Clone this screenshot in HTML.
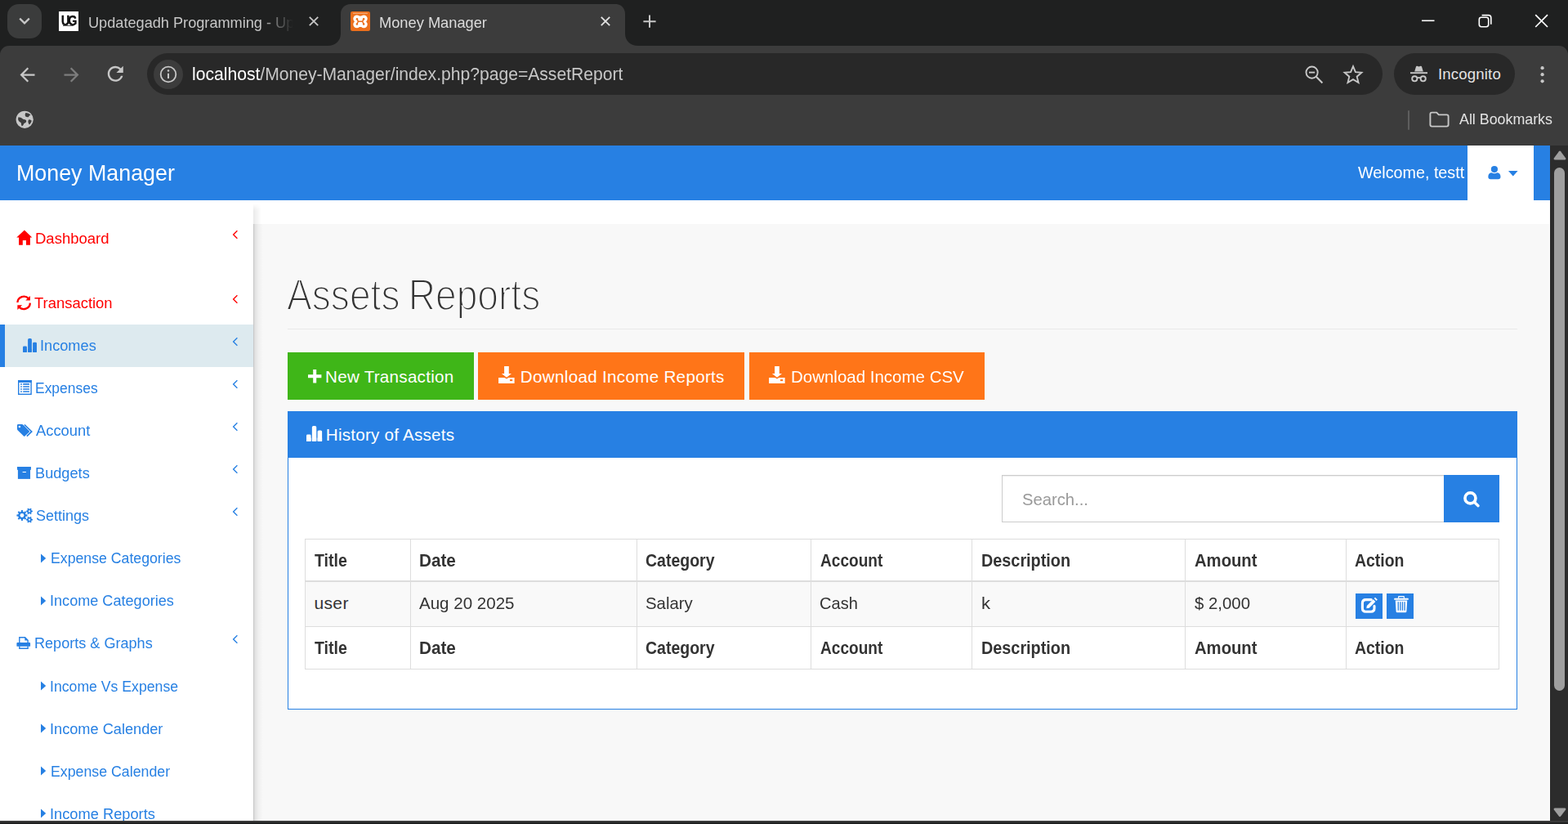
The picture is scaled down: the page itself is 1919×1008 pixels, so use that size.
<!DOCTYPE html>
<html lang="en"><head><meta charset="utf-8"><title>Money Manager</title><style>
*{margin:0;padding:0;box-sizing:border-box}
html,body{width:1919px;height:1008px;overflow:hidden;background:#fff}
body{position:relative;font-family:"Liberation Sans",sans-serif}
.b{position:absolute;display:block}
.t{position:absolute;display:block;white-space:nowrap;line-height:1;transform-origin:0 0;font-weight:400;text-decoration:none}
svg{overflow:visible}
</style></head>
<body>
<div class="browser-chrome">
<div class="b" style="left:0px;top:0px;width:1919px;height:70px;background:#1f2020;"></div>
<div class="b" style="left:0px;top:55.7px;width:1919px;height:122.3px;background:#3c3c3c;border-radius:11px 11px 0 0;"></div>
<div class="b" style="left:9px;top:5px;width:42px;height:42px;background:#3b3c3c;border-radius:14px;"></div>
<svg class="b" style="left:9px;top:5px;" width="42" height="42" viewBox="0 0 42 42"><path d="M15.2 17.6 L21 23.4 L26.8 17.6" fill="none" stroke="#c7c7c7" stroke-width="2.2"/></svg>
<div class="b" style="left:72px;top:14px;width:24px;height:24px;background:#fff;"></div>
<div class="b" style="left:74.6px;top:16.6px;font-size:16.4px;font-weight:700;color:#111;letter-spacing:-2.2px;line-height:1;white-space:nowrap;transform:scaleX(.86);transform-origin:0 0;-webkit-text-stroke:.5px #111">UG</div>
<div class="b" style="left:77px;top:30.6px;width:13px;height:0.9px;background:#555;"></div>
<span class="t" style="left:107.52px;top:19px;font-size:18.6px;color:#c7c7c7;transform:scaleX(0.9765);">Updategadh Programming - Up</span>
<div class="b" style="left:318px;top:10px;width:48px;height:36px;background:linear-gradient(90deg,rgba(31,32,32,0) 0%,#1f2020 85%)"></div>
<svg class="b" style="left:373.7px;top:16.2px;" width="20.0" height="20.0" viewBox="0 0 20.0 20.0"><path d="M4.8 4.8L15.2 15.2M15.2 4.8L4.8 15.2" stroke="#c7c7c7" stroke-width="1.8" fill="none"/></svg>
<svg class="b" style="left:401px;top:5px" width="380" height="51" viewBox="0 0 380 51"><path d="M0 51 C9 51 16 45 16 36 V12 C16 5 21 0 28 0 H352 C359 0 364 5 364 12 V36 C364 45 371 51 380 51 Z" fill="#3c3c3c"/></svg>
<svg class="b" style="left:429px;top:14px" width="24" height="24" viewBox="0 0 24 24"><rect x="0" y="0" width="24" height="24" rx="2.2" fill="#ec6f1c"/><rect x="2.8" y="1.7" width="18.2" height="1.1" rx=".5" fill="#f8b98c"/><circle cx="7.7" cy="8.8" r="4.4" fill="#fff"/><circle cx="16.3" cy="8.8" r="4.4" fill="#fff"/><circle cx="7.7" cy="15.8" r="4.4" fill="#fff"/><circle cx="16.3" cy="15.8" r="4.4" fill="#fff"/><rect x="7.7" y="5.6" width="8.6" height="13.4" fill="#fff"/><circle cx="7.9" cy="9.2" r="1.25" fill="#ec6f1c"/><circle cx="16.1" cy="9.2" r="1.25" fill="#ec6f1c"/><circle cx="7.9" cy="15.4" r="1.25" fill="#ec6f1c"/><circle cx="16.1" cy="15.4" r="1.25" fill="#ec6f1c"/><path d="M7.9 9.2 L9.4 12.3 L7.9 15.4 M16.1 9.2 L14.6 12.3 L16.1 15.4 M9.4 12.3 H14.6" stroke="#ec6f1c" stroke-width="1.5" fill="none" stroke-linecap="round"/></svg>
<span class="t" style="left:463.99px;top:19px;font-size:18.6px;color:#dcdcdc;transform:scaleX(0.9820);">Money Manager</span>
<svg class="b" style="left:731px;top:16.2px;" width="20" height="20.0" viewBox="0 0 20 20.0"><path d="M4.8 4.8L15.2 15.2M15.2 4.8L4.8 15.2" stroke="#e3e3e3" stroke-width="1.8" fill="none"/></svg>
<svg class="b" style="left:784px;top:16px;" width="22" height="22" viewBox="0 0 22 22"><path d="M11 2.6 V17.8 M3.4 10.2 H18.6" stroke="#c7c7c7" stroke-width="2" fill="none"/></svg>
<svg class="b" style="left:1736px;top:16px;" width="24" height="20" viewBox="0 0 24 20"><path d="M4 9.3 H19.5" stroke="#fff" stroke-width="1.6" fill="none"/></svg>
<svg class="b" style="left:1806px;top:14px;" width="24" height="24" viewBox="0 0 24 24"><rect x="4.3" y="7.3" width="11.4" height="11.4" rx="2.6" fill="none" stroke="#fff" stroke-width="1.6"/><path d="M7.6 4.6 H15.6 a3.2 3.2 0 0 1 3.2 3.2 V15.8" fill="none" stroke="#fff" stroke-width="1.6"/></svg>
<svg class="b" style="left:1876px;top:14px;" width="22" height="24" viewBox="0 0 22 24"><path d="M3.2 4.2 L18 19 M18 4.2 L3.2 19" stroke="#fff" stroke-width="1.7" fill="none"/></svg>
<svg class="b" style="left:19.5px;top:77.7px" width="27" height="27" viewBox="0 0 24 24"><path d="M20 11H7.83l5.59-5.59L12 4l-8 8 8 8 1.41-1.41L7.83 13H20v-2z" fill="#c7c7c7"/></svg>
<svg class="b" style="left:73.5px;top:77.7px" width="27" height="27" viewBox="0 0 24 24"><path d="M20 11H7.83l5.59-5.59L12 4l-8 8 8 8 1.41-1.41L7.83 13H20v-2z" fill="#7d7d7d" transform="translate(24,0) scale(-1,1)"/></svg>
<svg class="b" style="left:127.05000000000001px;top:76.35px" width="28.5" height="28.5" viewBox="0 0 24 24"><path d="M17.65 6.35A7.958 7.958 0 0 0 12 4c-4.42 0-7.99 3.58-7.99 8s3.57 8 7.99 8c3.73 0 6.84-2.55 7.73-6h-2.08A5.99 5.99 0 0 1 12 18c-3.31 0-6-2.69-6-6s2.69-6 6-6c1.66 0 3.14.69 4.22 1.78L13 11h7V4l-2.35 2.35z" fill="#c7c7c7"/></svg>
<div class="b" style="left:180px;top:65px;width:1512px;height:50.5px;background:#282828;border-radius:26px;"></div>
<div class="b" style="left:187.5px;top:72.5px;width:36.0px;height:36.0px;background:#3c3c3c;border-radius:18px;"></div>
<svg class="b" style="left:193.5px;top:78.5px;" width="24.0" height="24.0" viewBox="0 0 24.0 24.0"><circle cx="12" cy="12" r="9.3" fill="none" stroke="#c7c7c7" stroke-width="1.8"/><path d="M12 10.8 V17" stroke="#c7c7c7" stroke-width="2" fill="none"/><circle cx="12" cy="7.6" r="1.25" fill="#c7c7c7"/></svg>
<span class="t" style="left:235.06px;top:80px;font-size:21.6px;color:#c7c7c7;transform:scaleX(0.9773);"><span style="color:#fff">localhost</span>/Money-Manager/index.php?page=AssetReport</span>
<svg class="b" style="left:1596px;top:79px;" width="24" height="24" viewBox="0 0 24 24"><circle cx="9.6" cy="9.6" r="7.1" fill="none" stroke="#c7c7c7" stroke-width="1.9"/><path d="M14.8 14.8 L22.4 22.4" stroke="#c7c7c7" stroke-width="2.1" fill="none"/><path d="M6 9.6 H13.2" stroke="#c7c7c7" stroke-width="1.9"/></svg>
<svg class="b" style="left:1644px;top:79px;" width="24" height="24" viewBox="0 0 24 24"><path d="M12 2.2 L14.9 9.2 L22.4 9.8 L16.7 14.7 L18.5 22 L12 18.1 L5.5 22 L7.3 14.7 L1.6 9.8 L9.1 9.2 Z" fill="none" stroke="#c7c7c7" stroke-width="1.9" stroke-linejoin="miter"/></svg>
<div class="b" style="left:1706px;top:65px;width:148px;height:50.5px;background:#282828;border-radius:26px;"></div>
<svg class="b" style="left:1725px;top:79px;" width="23" height="23" viewBox="0 0 23 23"><path d="M6.2 8.6 L8 2.4 Q8.4 1.4 9.4 1.8 L11.5 2.6 L13.6 1.8 Q14.6 1.4 15 2.4 L16.8 8.6 Z" fill="#c7c7c7"/><path d="M1 10.2 H22" stroke="#c7c7c7" stroke-width="1.9"/><circle cx="6.3" cy="17.3" r="3.1" fill="none" stroke="#c7c7c7" stroke-width="1.9"/><circle cx="16.7" cy="17.3" r="3.1" fill="none" stroke="#c7c7c7" stroke-width="1.9"/><path d="M9.3 16.6 Q11.5 15.2 13.7 16.6" stroke="#c7c7c7" stroke-width="1.8" fill="none"/></svg>
<span class="t" style="left:1759.95px;top:82px;font-size:18.6px;color:#e3e3e3;letter-spacing:0.166px;">Incognito</span>
<svg class="b" style="left:1880px;top:78px;" width="16" height="26" viewBox="0 0 16 26"><circle cx="7.6" cy="5.2" r="2.1" fill="#c7c7c7"/><circle cx="7.6" cy="13.2" r="2.1" fill="#c7c7c7"/><circle cx="7.6" cy="21.3" r="2.1" fill="#c7c7c7"/></svg>
<svg class="b" style="left:19px;top:135px;" width="23" height="23" viewBox="0 0 23 23"><circle cx="11.2" cy="11.3" r="10.6" fill="#c7c7c7"/><path d="M3.2 8.6 q2.6 -.6 4.4 1 q1.6 1.8 4 1.6 q2.2 .6 1.6 2.8 q-1 1.6 -2.8 2 q-.6 2.4 -2.6 3.4 q-1.2 -2 -1 -4.2 q-2.6 -1.2 -3.6 -3.4 Z M12.4 3 q3.6 -.2 6.2 2.6 q-1.8 .8 -2.8 2.6 q-2.2 .6 -3.8 -1 q-1 -2.2 .4 -4.2 Z M16.4 11.2 q2.4 -.2 3.4 1.6 q-.6 3 -2.8 4.8 q-1.4 -1.4 -1.6 -3.6 q-.2 -1.6 1 -2.8 Z" fill="#3c3c3c"/></svg>
<div class="b" style="left:1723.3px;top:135px;width:1.7px;height:23.5px;background:#5e5e5e;border-radius:1px;"></div>
<svg class="b" style="left:1749px;top:136px;" width="25" height="20" viewBox="0 0 25 20"><path d="M1.4 3.6 Q1.4 1.6 3.4 1.6 H9.2 L11.8 4.4 H21.6 Q23.6 4.4 23.6 6.4 V16.6 Q23.6 18.6 21.6 18.6 H3.4 Q1.4 18.6 1.4 16.6 Z" fill="none" stroke="#c7c7c7" stroke-width="1.9" stroke-linejoin="round"/></svg>
<span class="t" style="left:1785.63px;top:137px;font-size:18.6px;color:#e3e3e3;transform:scaleX(0.9588);">All Bookmarks</span>
</div>
<div class="page">
<div class="b" style="left:0px;top:178px;width:1897px;height:826px;background:#ffffff;"></div>
<div class="b" style="left:310px;top:274px;width:1586px;height:730px;background:#f8f8f8;"></div>
<div class="b" style="left:310px;top:274px;width:13px;height:730px;background:linear-gradient(90deg,rgba(0,0,0,.24) 0,rgba(0,0,0,.12) 1.2px,rgba(0,0,0,.08) 3px,rgba(0,0,0,.03) 7px,rgba(0,0,0,0) 12px)"></div>
<div class="b" style="left:310px;top:249px;width:11px;height:25px;background:linear-gradient(90deg,rgba(0,0,0,.085) 0,rgba(0,0,0,.05) 4px,rgba(0,0,0,0) 10px);-webkit-mask-image:linear-gradient(180deg,rgba(0,0,0,0) 0,#000 9px);mask-image:linear-gradient(180deg,rgba(0,0,0,0) 0,#000 9px)"></div>
<header class="navbar">
<div class="b" style="left:0px;top:178px;width:1897px;height:67px;background:#2780e3;"></div>
<span class="t" style="left:19.83px;top:198px;font-size:27.8px;color:#ffffff;transform:scaleX(0.9651);">Money Manager</span>
<span class="t" style="left:1661.60px;top:201px;font-size:20.5px;color:#ffffff;transform:scaleX(0.9630);">Welcome, testt</span>
<div class="b" style="left:1796px;top:178px;width:81px;height:67px;background:#ffffff;"></div>
<svg class="b" style="left:1821px;top:203px;" width="16" height="16.2" viewBox="0 0 16 16.2"><circle cx="7.9" cy="4.1" r="4.1" fill="#2780e3"/><path d="M0.3 13.2 C0.3 10 2.2 8.2 4.6 8.2 Q7.9 10.2 11.2 8.2 C13.6 8.2 15.5 10 15.5 13.2 C15.5 15.2 14.4 16.2 12.6 16.2 H3.2 C1.4 16.2 0.3 15.2 0.3 13.2 Z" fill="#2780e3"/></svg>
<svg class="b" style="left:1845.6px;top:209px;" width="11.6" height="6.6" viewBox="0 0 11.6 6.6"><path d="M0 0 H11.6 L5.8 6.6 Z" fill="#2780e3"/></svg>
</header>
<nav class="sidebar">
<svg class="b" style="left:20px;top:281px;" width="20" height="19" viewBox="0 0 20 19"><path d="M9.9 0.5 L19.3 9.6 H16.9 V18.85 H12 V12.9 H7.8 V18.85 H3.1 V9.6 H0.25 Z" fill="#ff0000"/></svg>
<a class="t" style="left:42.65px;top:283px;font-size:18.7px;color:#ff0000;transform:scaleX(0.9907);">Dashboard</a>
<svg class="b" style="left:283px;top:280.2px;" width="10" height="14.0" viewBox="0 0 10 14.0"><path d="M7.4 2.2 L2.6 7 L7.4 11.8" fill="none" stroke="#ff0000" stroke-width="1.35"/></svg>
<svg class="b" style="left:20px;top:361px;" width="19" height="19" viewBox="0 0 19 19"><path d="M1.4 9 A7.75 7.75 0 0 1 15 4.35" fill="none" stroke="#ff0000" stroke-width="2.3"/><path d="M16.9 1.1 V6.6 H11.3 Z" fill="#ff0000"/><path d="M16.85 9.6 A7.75 7.75 0 0 1 3.16 14.3" fill="none" stroke="#ff0000" stroke-width="2.3"/><path d="M1.4 17.9 V12.3 H7.1 Z" fill="#ff0000"/></svg>
<a class="t" style="left:42.19px;top:362px;font-size:18.7px;color:#ff0000;transform:scaleX(0.9860);">Transaction</a>
<svg class="b" style="left:283px;top:359.2px;" width="10" height="14.0" viewBox="0 0 10 14.0"><path d="M7.4 2.2 L2.6 7 L7.4 11.8" fill="none" stroke="#ff0000" stroke-width="1.35"/></svg>
<div class="b" style="left:0px;top:397px;width:310px;height:52px;background:#ddeaef;"></div>
<div class="b" style="left:0px;top:397px;width:6px;height:52px;background:#2780e3;"></div>
<svg class="b" style="left:27.8px;top:414.1px;" width="17.0" height="16.9" viewBox="0 0 17 16.9"><rect x="0" y="9.4" width="4.95" height="7.5" rx="1.3" fill="#2780e3"/><rect x="0" y="13" width="4.95" height="3.9" fill="#2780e3"/><rect x="6.1" y="0" width="4.8" height="16.9" rx="1.6" fill="#2780e3"/><rect x="6.1" y="13" width="4.8" height="3.9" fill="#2780e3"/><rect x="12.1" y="4.8" width="4.9" height="12.1" rx="1.4" fill="#2780e3"/><rect x="12.1" y="13" width="4.9" height="3.9" fill="#2780e3"/></svg>
<a class="t" style="left:48.78px;top:414px;font-size:18.7px;color:#2780e3;transform:scaleX(0.9731);">Incomes</a>
<svg class="b" style="left:283px;top:411px;" width="10" height="14" viewBox="0 0 10 14"><path d="M7.4 2.2 L2.6 7 L7.4 11.8" fill="none" stroke="#2780e3" stroke-width="1.35"/></svg>
<svg class="b" style="left:21.9px;top:465px;" width="16.8" height="18" viewBox="0 0 16.8 18"><rect x="0.7" y="0.7" width="15.4" height="16.6" fill="none" stroke="#2780e3" stroke-width="1.4"/><rect x="0" y="0" width="16.8" height="3" fill="#2780e3"/><rect x="3.1" y="4.1" width="1.8" height="1.7" rx=".4" fill="#2780e3"/><rect x="6.1" y="4.1" width="7.9" height="1.7" rx=".5" fill="#2780e3"/><rect x="3.1" y="7.15" width="1.8" height="1.7" rx=".4" fill="#2780e3"/><rect x="6.1" y="7.15" width="7.9" height="1.7" rx=".5" fill="#2780e3"/><rect x="3.1" y="10.15" width="1.8" height="1.7" rx=".4" fill="#2780e3"/><rect x="6.1" y="10.15" width="7.9" height="1.7" rx=".5" fill="#2780e3"/><rect x="3.1" y="13.15" width="1.8" height="1.7" rx=".4" fill="#2780e3"/><rect x="6.1" y="13.15" width="7.9" height="1.7" rx=".5" fill="#2780e3"/></svg>
<a class="t" style="left:43.28px;top:466px;font-size:18.7px;color:#2780e3;transform:scaleX(0.9336);">Expenses</a>
<svg class="b" style="left:283px;top:463.2px;" width="10" height="14.0" viewBox="0 0 10 14.0"><path d="M7.4 2.2 L2.6 7 L7.4 11.8" fill="none" stroke="#2780e3" stroke-width="1.35"/></svg>
<svg class="b" style="left:20.85px;top:519px;" width="19.0" height="15" viewBox="0 0 19.0 15"><path d="M0 1.2 Q0 0 1.2 0 H5.8 Q6.6 0 7.2 0.6 L14.8 8.2 Q15.5 8.9 14.8 9.6 L9.4 14.6 Q8.7 15.2 8 14.6 L0.6 7.2 Q0 6.6 0 5.8 Z" fill="#2780e3"/><circle cx="2.85" cy="3.1" r="1.25" fill="#fff"/><path d="M8.9 0.5 L17.7 8.95 L11.9 14.6" fill="none" stroke="#2780e3" stroke-width="1.7"/></svg>
<a class="t" style="left:43.97px;top:518px;font-size:18.7px;color:#2780e3;transform:scaleX(0.9813);">Account</a>
<svg class="b" style="left:283px;top:515.3px;" width="10" height="14.0" viewBox="0 0 10 14.0"><path d="M7.4 2.2 L2.6 7 L7.4 11.8" fill="none" stroke="#2780e3" stroke-width="1.35"/></svg>
<svg class="b" style="left:21px;top:571px;" width="17" height="15" viewBox="0 0 17 15"><rect x="0" y="0" width="16.95" height="3.75" fill="#2780e3"/><rect x="0.9" y="3" width="15.15" height="11.9" fill="#2780e3"/><rect x="6.5" y="6" width="4.5" height="1.1" rx=".5" fill="#fff"/></svg>
<a class="t" style="left:43.14px;top:570px;font-size:18.7px;color:#2780e3;transform:scaleX(0.9733);">Budgets</a>
<svg class="b" style="left:283px;top:567.3px;" width="10" height="14.0" viewBox="0 0 10 14.0"><path d="M7.4 2.2 L2.6 7 L7.4 11.8" fill="none" stroke="#2780e3" stroke-width="1.35"/></svg>
<svg class="b" style="left:20px;top:621px;" width="21" height="20" viewBox="0 0 21 20"><polygon points="13.49,8.62 13.49,10.38 11.54,10.72 11.06,11.89 12.20,13.50 10.95,14.75 9.34,13.61 8.17,14.09 7.83,16.04 6.07,16.04 5.73,14.09 4.56,13.61 2.95,14.75 1.70,13.50 2.84,11.89 2.36,10.72 0.41,10.38 0.41,8.62 2.36,8.28 2.84,7.11 1.70,5.50 2.95,4.25 4.56,5.39 5.73,4.91 6.07,2.96 7.83,2.96 8.17,4.91 9.34,5.39 10.95,4.25 12.20,5.50 11.06,7.11 11.54,8.28" fill="#2780e3"/><circle cx="6.95" cy="9.5" r="2.45" fill="#fff"/><polygon points="19.94,3.69 19.94,5.11 18.71,5.38 18.20,6.26 18.58,7.46 17.35,8.16 16.51,7.23 15.49,7.23 14.65,8.16 13.42,7.46 13.80,6.26 13.29,5.38 12.06,5.11 12.06,3.69 13.29,3.42 13.80,2.54 13.42,1.34 14.65,0.64 15.49,1.57 16.51,1.57 17.35,0.64 18.58,1.34 18.20,2.54 18.71,3.42" fill="#2780e3"/><circle cx="16" cy="4.4" r="1.15" fill="#fff"/><polygon points="19.94,13.99 19.94,15.41 18.71,15.68 18.20,16.56 18.58,17.76 17.35,18.46 16.51,17.53 15.49,17.53 14.65,18.46 13.42,17.76 13.80,16.56 13.29,15.68 12.06,15.41 12.06,13.99 13.29,13.72 13.80,12.84 13.42,11.64 14.65,10.94 15.49,11.87 16.51,11.87 17.35,10.94 18.58,11.64 18.20,12.84 18.71,13.72" fill="#2780e3"/><circle cx="16" cy="14.7" r="1.15" fill="#fff"/></svg>
<a class="t" style="left:43.86px;top:622px;font-size:18.7px;color:#2780e3;transform:scaleX(0.9645);">Settings</a>
<svg class="b" style="left:283px;top:619.4px;" width="10" height="14.0" viewBox="0 0 10 14.0"><path d="M7.4 2.2 L2.6 7 L7.4 11.8" fill="none" stroke="#2780e3" stroke-width="1.35"/></svg>
<svg class="b" style="left:50px;top:676.5px;" width="7" height="12.0" viewBox="0 0 7 12.0"><path d="M0 0.6 L6.2 6 L0 11.4 Z" fill="#2780e3"/></svg>
<a class="t" style="left:61.67px;top:674px;font-size:18.7px;color:#2780e3;transform:scaleX(0.9471);">Expense Categories</a>
<svg class="b" style="left:50px;top:728.5px;" width="7" height="12.0" viewBox="0 0 7 12.0"><path d="M0 0.6 L6.2 6 L0 11.4 Z" fill="#2780e3"/></svg>
<a class="t" style="left:61.36px;top:726px;font-size:18.7px;color:#2780e3;transform:scaleX(0.9682);">Income Categories</a>
<svg class="b" style="left:20px;top:779px;" width="18" height="16" viewBox="0 0 18 16"><path d="M3.8 7 V0.7 H10.6 L14.1 4.2 V7" fill="none" stroke="#2780e3" stroke-width="1.4"/><path d="M10.3 0.4 L14.4 4.5 H10.3 Z" fill="#2780e3"/><rect x="0.4" y="7" width="16.7" height="4.8" rx="0.9" fill="#2780e3"/><path d="M3.8 11.6 V14.2 H14.1 V11.6" fill="none" stroke="#2780e3" stroke-width="1.4"/></svg>
<a class="t" style="left:41.96px;top:778px;font-size:18.7px;color:#2780e3;transform:scaleX(0.9673);">Reports &amp; Graphs</a>
<svg class="b" style="left:283px;top:775.4px;" width="10" height="14.0" viewBox="0 0 10 14.0"><path d="M7.4 2.2 L2.6 7 L7.4 11.8" fill="none" stroke="#2780e3" stroke-width="1.35"/></svg>
<svg class="b" style="left:50px;top:833.2px;" width="7" height="12.0" viewBox="0 0 7 12.0"><path d="M0 0.6 L6.2 6 L0 11.4 Z" fill="#2780e3"/></svg>
<a class="t" style="left:61.47px;top:831px;font-size:18.7px;color:#2780e3;transform:scaleX(0.9449);">Income Vs Expense</a>
<svg class="b" style="left:50px;top:885.2px;" width="7" height="12.0" viewBox="0 0 7 12.0"><path d="M0 0.6 L6.2 6 L0 11.4 Z" fill="#2780e3"/></svg>
<a class="t" style="left:61.38px;top:883px;font-size:18.7px;color:#2780e3;transform:scaleX(0.9726);">Income Calender</a>
<svg class="b" style="left:50px;top:937.2px;" width="7" height="12.0" viewBox="0 0 7 12.0"><path d="M0 0.6 L6.2 6 L0 11.4 Z" fill="#2780e3"/></svg>
<a class="t" style="left:61.66px;top:935px;font-size:18.7px;color:#2780e3;transform:scaleX(0.9502);">Expense Calender</a>
<svg class="b" style="left:50px;top:989.4px;" width="7" height="12.0" viewBox="0 0 7 12.0"><path d="M0 0.6 L6.2 6 L0 11.4 Z" fill="#2780e3"/></svg>
<a class="t" style="left:61.32px;top:987px;font-size:18.7px;color:#2780e3;transform:scaleX(0.9770);">Income Reports</a>
</nav>
<main class="content">
<h1 class="t" style="left:351.19px;top:333px;font-size:53.2px;color:#333333;transform:translateY(0.6px) scaleX(0.8675);-webkit-text-stroke:2px #f8f8f8;word-spacing:-3px;">Assets Reports</h1>
<div class="b" style="left:352px;top:402px;width:1505px;height:1px;background:#e9e9e9;"></div>
<div class="b" style="left:352px;top:431px;width:227.6px;height:58px;background:#3fb618;"></div>
<svg class="b" style="left:377.2px;top:452px;" width="16.6" height="16.2" viewBox="0 0 16.6 16.2"><path d="M6.2 0 H10.2 V6.2 H16.4 V10.2 H10.2 V16.4 H6.2 V10.2 H0 V6.2 H6.2 Z" fill="#fff"/></svg>
<span class="t" style="left:398.05px;top:451px;font-size:20.6px;color:#ffffff;letter-spacing:0.268px;">New Transaction</span>
<div class="b" style="left:585px;top:431px;width:325.8px;height:58px;background:#ff7518;"></div>
<svg class="b" style="left:610px;top:448px;" width="19.6" height="21" viewBox="0 0 19.6 21"><path d="M7.1 0.1 H12.8 V9 H16 L10 13.7 L3.9 9 H7.1 Z" fill="#fff"/><path d="M0.1 14 H7.6 L10 15.6 L12.4 14 H19.6 V21 H0.1 Z" fill="#fff"/><rect x="14" y="16.1" width="3.2" height="2" fill="#ff7518"/></svg>
<span class="t" style="left:636.87px;top:451px;font-size:20.6px;color:#ffffff;letter-spacing:0.313px;">Download Income Reports</span>
<div class="b" style="left:917px;top:431px;width:287.6px;height:58px;background:#ff7518;"></div>
<svg class="b" style="left:941.4px;top:448px;" width="19.6" height="21" viewBox="0 0 19.6 21"><path d="M7.1 0.1 H12.8 V9 H16 L10 13.7 L3.9 9 H7.1 Z" fill="#fff"/><path d="M0.1 14 H7.6 L10 15.6 L12.4 14 H19.6 V21 H0.1 Z" fill="#fff"/><rect x="14" y="16.1" width="3.2" height="2" fill="#ff7518"/></svg>
<span class="t" style="left:967.94px;top:451px;font-size:20.6px;color:#ffffff;transform:scaleX(0.9946);">Download Income CSV</span>
<section class="panel">
<div class="b" style="left:352px;top:503px;width:1505.4px;height:364.6px;background:#ffffff;border:1px solid #2780e3;"></div>
<div class="b" style="left:352px;top:503px;width:1505.4px;height:56.6px;background:#2780e3;"></div>
<svg class="b" style="left:374.8px;top:521.1px;" width="19.12" height="19.01" viewBox="0 0 17 16.9"><rect x="0" y="9.4" width="4.95" height="7.5" rx="1.3" fill="#ffffff"/><rect x="0" y="13" width="4.95" height="3.9" fill="#ffffff"/><rect x="6.1" y="0" width="4.8" height="16.9" rx="1.6" fill="#ffffff"/><rect x="6.1" y="13" width="4.8" height="3.9" fill="#ffffff"/><rect x="12.1" y="4.8" width="4.9" height="12.1" rx="1.4" fill="#ffffff"/><rect x="12.1" y="13" width="4.9" height="3.9" fill="#ffffff"/></svg>
<span class="t" style="left:398.80px;top:522px;font-size:20.6px;color:#ffffff;letter-spacing:0.244px;">History of Assets</span>
<div class="b" style="left:1226px;top:581px;width:542px;height:58px;background:#ffffff;border:1px solid #ccc;box-shadow:inset 0 1px 1px rgba(0,0,0,.075);"></div>
<span class="t" style="left:1250.53px;top:601px;font-size:20.7px;color:#999999;transform:scaleX(0.9779);">Search...</span>
<div class="b" style="left:1767px;top:581px;width:68px;height:58px;background:#2780e3;"></div>
<svg class="b" style="left:1791px;top:600.6px;" width="20" height="20.0" viewBox="0 0 20 20.0"><circle cx="8.45" cy="8.4" r="6.5" fill="none" stroke="#fff" stroke-width="3.6"/><path d="M13.4 13.2 L18.1 17.7" stroke="#fff" stroke-width="3.3" stroke-linecap="round"/></svg>
<div class="b" style="left:373px;top:712px;width:1462px;height:54px;background:#f9f9f9;"></div>
<div class="b" style="left:373px;top:659px;width:1px;height:160px;background:#dddddd;"></div>
<div class="b" style="left:502px;top:659px;width:1px;height:160px;background:#dddddd;"></div>
<div class="b" style="left:779px;top:659px;width:1px;height:160px;background:#dddddd;"></div>
<div class="b" style="left:992px;top:659px;width:1px;height:160px;background:#dddddd;"></div>
<div class="b" style="left:1189px;top:659px;width:1px;height:160px;background:#dddddd;"></div>
<div class="b" style="left:1450px;top:659px;width:1px;height:160px;background:#dddddd;"></div>
<div class="b" style="left:1647px;top:659px;width:1px;height:160px;background:#dddddd;"></div>
<div class="b" style="left:1834px;top:659px;width:1px;height:160px;background:#dddddd;"></div>
<div class="b" style="left:373px;top:659px;width:1462px;height:1px;background:#dddddd;"></div>
<div class="b" style="left:373px;top:710px;width:1462px;height:2px;background:#dddddd;"></div>
<div class="b" style="left:373px;top:766px;width:1462px;height:1px;background:#dddddd;"></div>
<div class="b" style="left:373px;top:818px;width:1462px;height:1px;background:#dddddd;"></div>
<span class="t" style="left:385.27px;top:675px;font-size:22.1px;color:#333333;font-weight:700;transform:scaleX(0.8838);">Title</span>
<span class="t" style="left:513.30px;top:675px;font-size:22.1px;color:#333333;font-weight:700;transform:scaleX(0.9356);">Date</span>
<span class="t" style="left:790.20px;top:675px;font-size:22.1px;color:#333333;font-weight:700;transform:scaleX(0.8829);">Category</span>
<span class="t" style="left:1003.51px;top:675px;font-size:22.1px;color:#333333;font-weight:700;transform:scaleX(0.8632);">Account</span>
<span class="t" style="left:1200.86px;top:675px;font-size:22.1px;color:#333333;font-weight:700;transform:scaleX(0.8970);">Description</span>
<span class="t" style="left:1461.74px;top:675px;font-size:22.1px;color:#333333;font-weight:700;transform:scaleX(0.9166);">Amount</span>
<span class="t" style="left:1658.38px;top:675px;font-size:22.1px;color:#333333;font-weight:700;transform:scaleX(0.8788);">Action</span>
<span class="t" style="left:385.27px;top:782px;font-size:22.1px;color:#333333;font-weight:700;transform:scaleX(0.8838);">Title</span>
<span class="t" style="left:513.30px;top:782px;font-size:22.1px;color:#333333;font-weight:700;transform:scaleX(0.9356);">Date</span>
<span class="t" style="left:790.20px;top:782px;font-size:22.1px;color:#333333;font-weight:700;transform:scaleX(0.8829);">Category</span>
<span class="t" style="left:1003.51px;top:782px;font-size:22.1px;color:#333333;font-weight:700;transform:scaleX(0.8632);">Account</span>
<span class="t" style="left:1200.86px;top:782px;font-size:22.1px;color:#333333;font-weight:700;transform:scaleX(0.8970);">Description</span>
<span class="t" style="left:1461.74px;top:782px;font-size:22.1px;color:#333333;font-weight:700;transform:scaleX(0.9166);">Amount</span>
<span class="t" style="left:1658.38px;top:782px;font-size:22.1px;color:#333333;font-weight:700;transform:scaleX(0.8788);">Action</span>
<span class="t" style="left:384.43px;top:727px;font-size:21.0px;color:#333333;letter-spacing:0.382px;">user</span>
<span class="t" style="left:513.05px;top:727px;font-size:21.0px;color:#333333;transform:scaleX(0.9780);">Aug 20 2025</span>
<span class="t" style="left:789.62px;top:727px;font-size:21.0px;color:#333333;transform:scaleX(0.9706);">Salary</span>
<span class="t" style="left:1003.08px;top:727px;font-size:21.0px;color:#333333;transform:scaleX(0.9558);">Cash</span>
<span class="t" style="left:1200.94px;top:727px;font-size:21.0px;color:#333333;transform:scaleX(1.0497);">k</span>
<span class="t" style="left:1462.27px;top:727px;font-size:21.0px;color:#333333;transform:scaleX(0.9704);">$ 2,000</span>
<div class="b" style="left:1659px;top:726px;width:33px;height:31px;background:#2780e3;"></div>
<svg class="b" style="left:1666px;top:730.6px;" width="20" height="19.0" viewBox="0 0 20 19.0"><path d="M12.2 2.6 H5.6 Q1.4 2.6 1.4 6.8 V13 Q1.4 17.2 5.6 17.2 H11.8 Q16 17.2 16 13 V10.4" fill="none" stroke="#fff" stroke-width="3.1" stroke-linecap="round"/><path d="M6.9 9.9 L14.6 2.2 L17.4 5 L9.7 12.7 L6.3 13.3 Z" fill="#fff"/><path d="M15.7 1.1 L17 -0.2 L19.8 2.6 L18.5 3.9 Z" fill="#fff"/></svg>
<div class="b" style="left:1697px;top:726px;width:33px;height:31px;background:#2780e3;"></div>
<svg class="b" style="left:1705.6px;top:728.8px;" width="18.0" height="20.6" viewBox="0 0 18.0 20.6"><path d="M5.6 2.8 V1.4 Q5.6 0.6 6.4 0.6 H11.6 Q12.4 0.6 12.4 1.4 V2.8" fill="none" stroke="#fff" stroke-width="1.3"/><rect x="0.2" y="2.8" width="17.6" height="2" rx=".6" fill="#fff"/><path d="M1.8 5.6 H16.2 L15.4 19 Q15.3 20.2 14.1 20.2 H3.9 Q2.7 20.2 2.6 19 Z" fill="#fff"/><rect x="4.6" y="7.2" width="1.3" height="10.6" fill="#2780e3"/><rect x="7.2" y="7.2" width="1.3" height="10.6" fill="#2780e3"/><rect x="9.8" y="7.2" width="1.3" height="10.6" fill="#2780e3"/><rect x="12.4" y="7.2" width="1.3" height="10.6" fill="#2780e3"/></svg>
</section>
</main>
<div class="b" style="left:1897px;top:178px;width:22px;height:826px;background:#2c2c2c;"></div>
<div class="b" style="left:1902px;top:205px;width:13.2px;height:639.8px;background:#9f9f9f;border-radius:7px;"></div>
<svg class="b" style="left:1900.6px;top:184px;" width="16.0" height="12" viewBox="0 0 16.0 12"><path d="M6.9 1.2 Q8 -0.2 9.1 1.2 L15.2 9.4 Q16 11.2 14.2 11.4 H1.8 Q0 11.2 0.8 9.4 Z" fill="#9f9f9f"/></svg>
<svg class="b" style="left:1900.6px;top:987.6px;" width="16.0" height="12.0" viewBox="0 0 16.0 12.0"><path d="M6.9 10.6 Q8 12 9.1 10.6 L15.2 2.4 Q16 0.6 14.2 0.4 H1.8 Q0 0.6 0.8 2.4 Z" fill="#9f9f9f"/></svg>
<div class="b" style="left:0px;top:1004px;width:1919px;height:2px;background:#3a3a3a;"></div>
<div class="b" style="left:0px;top:1005.6px;width:1919px;height:2.4px;background:#1f2020;"></div>
</div>
</body></html>
